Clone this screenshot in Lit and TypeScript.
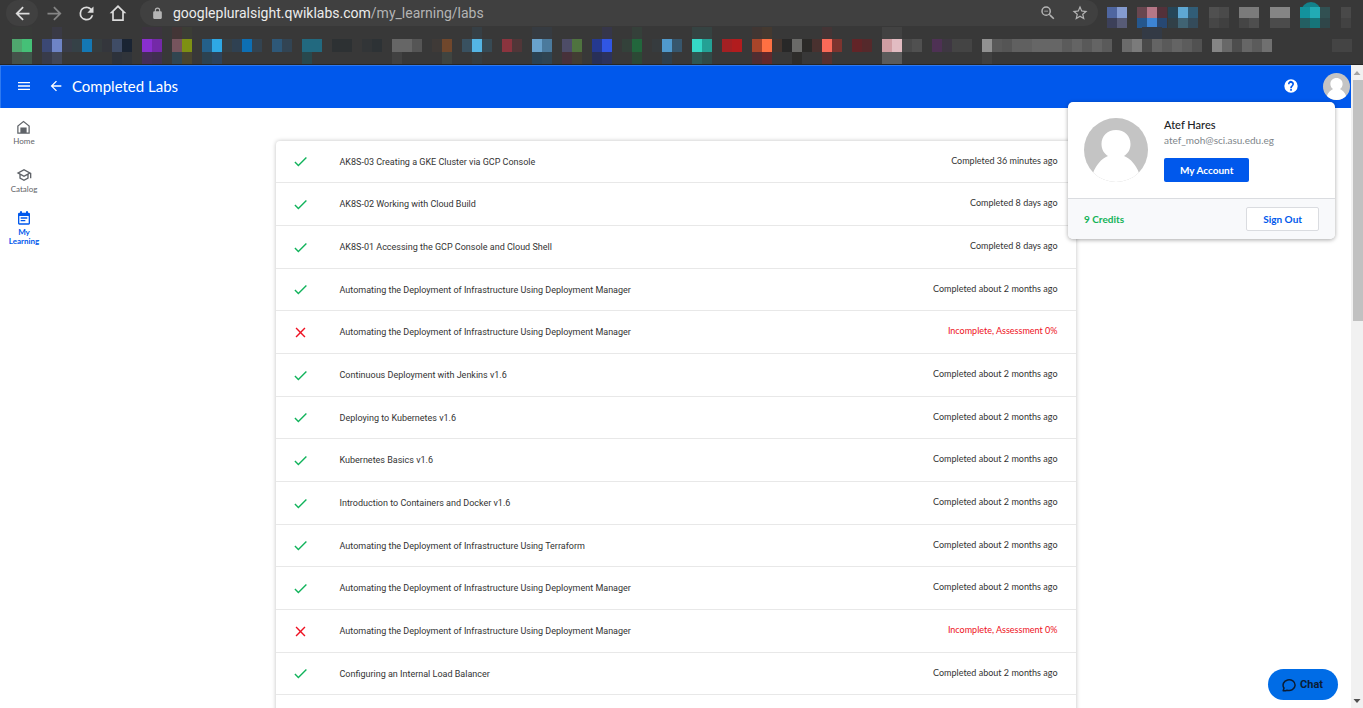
import { LitElement, html, svg, css } from "lit";
import { customElement } from "lit/decorators.js";

type Lab = { title: string; status: string; ok: boolean };
type Cell = [number, string, number?];

const lab = (title: string, status = "Completed about 2 months ago", ok = true): Lab => ({ title, status, ok });
const DEPLOY = "Automating the Deployment of Infrastructure Using Deployment Manager";

const LABS: Lab[] = [
  lab("AK8S-03 Creating a GKE Cluster via GCP Console", "Completed 36 minutes ago"),
  lab("AK8S-02 Working with Cloud Build", "Completed 8 days ago"),
  lab("AK8S-01 Accessing the GCP Console and Cloud Shell", "Completed 8 days ago"),
  lab(DEPLOY),
  lab(DEPLOY, "Incomplete, Assessment 0%", false),
  lab("Continuous Deployment with Jenkins v1.6"),
  lab("Deploying to Kubernetes v1.6"),
  lab("Kubernetes Basics v1.6"),
  lab("Introduction to Containers and Docker v1.6"),
  lab("Automating the Deployment of Infrastructure Using Terraform"),
  lab(DEPLOY),
  lab(DEPLOY, "Incomplete, Assessment 0%", false),
  lab("Configuring an Internal Load Balancer"),
];

// Pixelated bookmark icons: start x, colour, width (10 when omitted).
const BOOKMARKS: Cell[] = [
  [12, "#4fa76e"], [22, "#45c077"], [42, "#3b4874"], [52, "#6e84c6"], [62, "#3a3d48"], [72, "#354147"],
  [82, "#1478b4"], [92, "#363c3e"], [102, "#34363c"], [112, "#3f4c66"], [122, "#1a2433"], [142, "#8a2fd0"],
  [152, "#7429a8"], [172, "#76545d"], [182, "#7e9013"], [202, "#24608a"], [212, "#2ea8e5"], [222, "#363f44"],
  [232, "#2f4152"], [242, "#0d6fb4"], [252, "#334350"], [272, "#2e5878"], [282, "#324453"], [302, "#22697f", 20],
  [332, "#2d3133", 20], [362, "#323537"], [372, "#2d3235"], [392, "#666666", 20], [412, "#555555"],
  [432, "#3f3a37"], [442, "#70472c"], [462, "#395160"], [472, "#54b5e4"], [482, "#374a54"], [502, "#8b343e"],
  [512, "#513638"], [532, "#69a2cc"], [542, "#4b7a9d"], [562, "#4d4c67"], [572, "#4f733f"], [592, "#25398f"],
  [602, "#3056e5"], [622, "#33413a"], [632, "#22663c"], [652, "#363b3e"], [662, "#5099cc"], [672, "#37566c"],
  [692, "#35d8c6"], [702, "#24a195"], [722, "#a32023"], [732, "#b11c1e"], [752, "#a8452a"], [762, "#ff7042"],
  [772, "#43352f"], [782, "#282828"], [792, "#6a6a68"], [802, "#2b2a28"], [812, "#49312f"], [822, "#fb6a58"],
  [832, "#7c342f"], [852, "#622427"], [862, "#55292b"], [882, "#d09da2"], [892, "#e2bcc2"], [902, "#494949"],
  [912, "#505050"], [932, "#4e3154"], [942, "#3e3742"], [952, "#444444", 20], [982, "#919191"], [992, "#595959"],
  [1002, "#555555"], [1012, "#606060", 20], [1032, "#666666", 30], [1062, "#5b5b5b"], [1072, "#646464"],
  [1082, "#595959"], [1092, "#646464"], [1102, "#5a5a5a"], [1122, "#6b6b6b"], [1132, "#7b7b7b"],
  [1142, "#4a4a4a"], [1152, "#646464"], [1162, "#5a5a5a"], [1172, "#646464"], [1182, "#5c5c5c"], [1192, "#515151"],
  [1212, "#858585"], [1222, "#686868"], [1232, "#4d4d4d"], [1242, "#666666"], [1252, "#5b5b5b"], [1262, "#707070"],
  [1332, "#444444", 20],
];
const GLOW: Cell[] = [
  [12, "#45514a"], [22, "#40564a"], [42, "#383b4a"], [52, "#424758"], [112, "#2d323b"], [122, "#30343a"],
  [142, "#452d58"], [152, "#402f50"], [172, "#314550"], [182, "#49452f"], [202, "#2c4250"], [212, "#2d435b"],
  [302, "#28484d"], [392, "#414141"], [442, "#3f4440"], [472, "#363d40"], [532, "#2b4252"], [542, "#2f4452"],
  [562, "#47313a"], [572, "#423d33"], [592, "#282f57"], [602, "#2c325d"], [632, "#2c4935"], [662, "#2e3f4c"],
  [692, "#2f5752"], [702, "#304a47"], [752, "#502d31"], [762, "#63282b"], [792, "#2e2d2b"], [822, "#573030"],
  [882, "#5b5b5b", 20], [982, "#404040"],
];
const HAZE: Cell[] = [
  [12, "#383a38", 20], [52, "#3a3a45"], [142, "#3c343f", 20], [172, "#433536"], [182, "#3b3d35"],
  [472, "#363f45"], [532, "#363b41", 20], [602, "#36364a"], [632, "#35403a"], [692, "#354342", 20],
  [752, "#403633"], [762, "#443930"], [822, "#443435"], [882, "#424242", 20], [1142, "#333a45", 20],
];
const EXT_TOP: Cell[] = [
  [1, "#4f66a0"], [11, "#849bd0"], [31, "#68464f"], [41, "#b67787"], [51, "#54313a"], [62, "#264658"],
  [72, "#5ea7d3"], [82, "#315d77"], [103, "#505050"], [113, "#4a4a4a"], [133, "#7b7b7b", 20],
  [164, "#858585", 20], [194, "#13929c"], [204, "#22abb5"], [214, "#315052"], [235, "#494949"],
];
const EXT_LOW: Cell[] = [
  [1, "#3c4059"], [11, "#575b76"], [31, "#25578d"], [41, "#3d84d4"], [51, "#274873"], [62, "#314048"],
  [72, "#406373"], [82, "#344b5a"], [103, "#464646"], [113, "#404040"], [133, "#454545"], [143, "#4e4e4e"],
  [164, "#4b4b4b", 20], [194, "#245f62"], [204, "#167479"], [214, "#2f4649"], [235, "#424242"],
];

const cells = (list: Cell[], y: number, h: number) =>
  list.map(([x, fill, w = 10]) => svg`<rect x=${x} y=${y} width=${w} height=${h} fill=${fill}></rect>`);

const avatar = html`<svg viewBox="0 0 64 64" width="100%" height="100%" aria-hidden="true">
  <defs><clipPath id="disc"><circle cx="32" cy="32" r="32" /></clipPath></defs>
  <g clip-path="url(#disc)">
    <rect width="64" height="64" fill="#c4c4c4" />
    <path d="M32 12c8.500 0 14.500 6 14.500 14 0 5.500-2.500 9.500-6.500 12 7 3 12 9 15 17v9H9v-9c3-8 8-14 15-17-4-2.500-6.500-6.500-6.500-12 0-8 6-14 14.500-14z" fill="#fff" />
  </g>
</svg>`;

const icon = (path: string, size: number) =>
  html`<svg viewBox="0 0 24 24" width=${size} height=${size} fill="currentColor" aria-hidden="true"><path d=${path} /></svg>`;

const BACK = "M20 11H7.830l5.590-5.590L12 4l-8 8 8 8 1.410-1.410L7.830 13H20v-2z";
const FORWARD = "M12 4l-1.410 1.410L16.170 11H4v2h12.170l-5.580 5.590L12 20l8-8z";
const RELOAD = "M17.650 6.350A7.960 7.960 0 0 0 12 4a8 8 0 1 0 7.730 10h-2.080A6 6 0 1 1 12 6c1.660 0 3.140.69 4.220 1.780L13 11h7V4l-2.350 2.350z";
const HOME = "M12 2.500L2 12.300h3V21.500h14v-9.200h3L12 2.500zM12 5.300l5 4.900v9.300H7v-9.300l5-4.900z";
const LOCK = "M18 8h-1V6A5 5 0 0 0 7 6v2H6a2 2 0 0 0-2 2v10c0 1.100.9 2 2 2h12a2 2 0 0 0 2-2V10a2 2 0 0 0-2-2zM9 6a3 3 0 0 1 6 0v2H9V6z";
const ZOOM_OUT = "M15.500 14h-.79l-.28-.27A6.470 6.470 0 0 0 16 9.500 6.500 6.500 0 1 0 9.500 16c1.610 0 3.090-.59 4.230-1.570l.27.28v.79l5 4.990L20.490 19l-4.990-5zm-6 0a4.500 4.500 0 1 1 0-9 4.500 4.500 0 0 1 0 9zM7 9h5v1H7z";
const STAR = "M22 9.240l-7.190-.62L12 2 9.190 8.630 2 9.240l5.460 4.730L5.820 21 12 17.270 18.180 21l-1.630-7.030L22 9.240zM12 15.400l-3.760 2.270 1-4.280-3.320-2.880 4.380-.38L12 6.100l1.710 4.040 4.380.38-3.320 2.880 1 4.280L12 15.400z";
const MENU = "M3 18h18v-2H3v2zm0-5h18v-2H3v2zm0-7v2h18V6H3z";
const HELP = "M12 2a10 10 0 1 0 0 20 10 10 0 0 0 0-20zm1.300 17h-2.500v-2.500h2.500V19zm2.300-7.600l-.9.920c-.9.900-1.400 1.580-1.400 3.180h-2.500v-.5c0-1.100.45-2.100 1.170-2.830l1.240-1.260A2 2 0 1 0 9.800 9.500H7.500a4.500 4.500 0 1 1 8.100 1.900z";
const SIDE_HOME = "M12 1L2 9v13h20V9L12 1zm8 19h-3v-8H7v8H4V10l8-6.500L20 10v10z";
const SCHOOL = "M12 3L1 9l4 2.180v6L12 21l7-3.820v-6l2-1.090V17h2V9L12 3zm6.820 6L12 12.720 5.180 9 12 5.280 18.820 9zM17 16l-5 2.720L7 16v-3.730L12 15l5-2.730V16z";
const CALENDAR = "M19 4h-1V2h-3v2H9V2H6v2H5a2 2 0 0 0-2 2v14c0 1.100.9 2 2 2h14a2 2 0 0 0 2-2V6a2 2 0 0 0-2-2zm0 16H5V9h14v11zM7 11h10v2H7zM7 15h7v2H7z";
const CHECK = "M9 16.170L4.830 12l-1.420 1.410L9 19 21 7l-1.410-1.410z";
const CROSS = "M19 6.410L17.590 5 12 10.590 6.410 5 5 6.410 10.590 12 5 17.590 6.410 19 12 13.410 17.590 19 19 17.590 13.410 12z";

@customElement("browser-chrome")
class BrowserChrome extends LitElement {
  static styles = css`
    :host { display: block; background: #383838; border-bottom: 1px solid #252525; color: #dcdcdc; overflow: hidden; }
    .bar { display: flex; align-items: center; height: 26px; padding-left: 6px; }
    .nav { display: flex; }
    button { display: grid; place-items: center; flex: none; width: 32px; height: 26px; padding: 0; border: 0; background: none; color: inherit; }
    .back { background: #404040; border-radius: 14px; }
    .dim { color: #858585; }
    .address { display: flex; align-items: center; flex: 1; height: 26px; margin-left: 6px; padding: 0 2px 0 11px; background: #404040; border-radius: 12px 12px 14px 14px; color: #b4b4b4; }
    .url { flex: 1; margin-left: 9px; font: 14px/20px Roboto, sans-serif; outline: 0; white-space: nowrap; }
    .host { color: #ececec; }
    .extensions { flex: none; width: 257px; height: 26px; overflow: visible; margin-left: 8px; }
    .bookmarks { display: block; height: 38px; }
  `;
  render() {
    return html`
      <div class="bar">
        <div class="nav">
          <button class="back" aria-label="Back">${icon(BACK, 21)}</button>
          <button class="dim" aria-label="Forward">${icon(FORWARD, 21)}</button>
          <button aria-label="Reload">${icon(RELOAD, 21)}</button>
          <button aria-label="Home page">${icon(HOME, 20)}</button>
        </div>
        <div class="address">
          ${icon(LOCK, 13)}
          <div class="url" role="textbox" contenteditable="true" aria-label="Address"><span class="host">googlepluralsight.qwiklabs.com</span>/my_learning/labs</div>
          <button aria-label="Zoom out">${icon(ZOOM_OUT, 18)}</button>
          <button aria-label="Bookmark this page">${icon(STAR, 18)}</button>
        </div>
        <svg class="extensions" aria-hidden="true">
          <circle cx="205" cy="12" r="10" fill="#13828b" />
          ${cells(EXT_TOP, 7, 11)}${cells(EXT_LOW, 18, 10)}
        </svg>
      </div>
      <svg class="bookmarks" width="100%" height="38" aria-hidden="true">
        ${cells(HAZE, 1, 12)}${cells(BOOKMARKS, 13, 13)}${cells(GLOW, 26, 12)}
      </svg>
    `;
  }
}

@customElement("account-menu")
class AccountMenu extends LitElement {
  static styles = css`
    :host { display: block; width: 267px; border-radius: 5px; background: #fff; overflow: hidden; box-shadow: 0 1px 4px rgba(0, 0, 0, 0.35); font: 10px/12px Lato, sans-serif; }
    .profile { display: flex; gap: 16px; padding: 16px; }
    .photo { width: 64px; height: 64px; }
    .name { font-size: 11px; line-height: 14px; color: #202124; font-weight: 500; }
    .mail { margin-top: 1px; line-height: 14px; color: #80868b; }
    button { height: 24px; padding: 0 16px; border-radius: 2px; font: 700 10px/12px Lato, sans-serif; }
    .primary { margin-top: 11px; border: 0; background: #0058ec; color: #fff; }
    .footer { display: flex; align-items: center; justify-content: space-between; padding: 8px 16px; border-top: 1px solid #dadce0; background: #f8f9fb; }
    .credits { color: #12b357; font-weight: 700; }
    .secondary { border: 1px solid #dadce0; background: #fff; color: #0058ec; }
  `;
  render() {
    return html`
      <div class="profile">
        <div class="photo">${avatar}</div>
        <div>
          <div class="name">Atef Hares</div>
          <div class="mail">atef_moh@sci.asu.edu.eg</div>
          <button class="primary">My Account</button>
        </div>
      </div>
      <div class="footer">
        <span class="credits">9 Credits</span>
        <button class="secondary">Sign Out</button>
      </div>
    `;
  }
}

@customElement("lab-list")
class LabList extends LitElement {
  static styles = css`
    :host { display: block; background: #fff; border-radius: 4px 4px 0 0; box-shadow: 0 0 4px rgba(0, 0, 0, 0.25); }
    ul { margin: 0; padding: 0; list-style: none; }
    li { box-sizing: border-box; display: flex; align-items: center; height: 43px; padding: 0 18px 0 16px; border-bottom: 1px solid #e8e8e8; }
    li:nth-child(3n + 1) { height: 42px; }
    .mark { display: flex; width: 48px; color: #12b35c; }
    .mark.fail, .status.fail { color: #ee1122; }
    .title { flex: 1; font: 9px/14px Roboto, sans-serif; color: #333; text-decoration: none; }
    .status { padding-bottom: 2px; font: 9px/14px Lato, sans-serif; color: #333; }
  `;
  render() {
    return html`<ul>
      ${LABS.map(({ title, status, ok }) => html`<li>
        <span class="mark ${ok ? "" : "fail"}">${icon(ok ? CHECK : CROSS, 17)}</span>
        <a class="title" href="#">${title}</a>
        <span class="status ${ok ? "" : "fail"}">${status}</span>
      </li>`)}
    </ul>`;
  }
}

@customElement("app-root")
class AppRoot extends LitElement {
  static styles = css`
    :host { display: flex; flex-direction: column; height: 100vh; overflow: hidden; background: #fff; }
    .window { display: flex; flex: 1; min-height: 0; }
    .page { position: relative; display: flex; flex: 1; flex-direction: column; min-width: 0; overflow: hidden; }
    header { box-sizing: border-box; display: flex; align-items: center; flex: none; height: 43px; padding: 0 0 2px 15px; border-top: 1px solid #2f7af0; border-left: 1px solid #2f7af0; background: #0058ec; color: #fff; }
    header button { display: grid; place-items: center; padding: 0; border: 0; background: none; color: inherit; }
    h1 { flex: 1; margin: 0 0 0 8px; font: 400 15px/20px Lato, sans-serif; }
    .back { margin-left: 16px; }
    header .user { width: 27px; height: 27px; margin-left: 24px; margin-right: 1px; }
    .body { display: grid; flex: 1; grid-template-columns: 48px minmax(0, 800px) 48px; justify-content: space-between; min-height: 0; padding-left: 1px; margin-left: -1px; }
    nav { display: flex; flex-direction: column; align-items: center; gap: 15px; padding-top: 12px; }
    nav a { display: flex; flex-direction: column; align-items: center; gap: 2px; min-height: 28px; font: 8px/9px Lato, sans-serif; color: #5f6368; text-align: center; text-decoration: none; }
    nav a:first-child { margin-bottom: 4px; }
    nav .current { color: #0058ec; font-weight: 700; }
    lab-list { margin: 33px 0 -8px; }
    account-menu { position: absolute; top: 37px; right: 16px; }
    .chat { position: absolute; right: 13px; bottom: 8px; display: flex; align-items: center; gap: 4px; height: 31px; padding: 0 15px 0 14px; border: 0; border-radius: 16px; background: #006ce6; color: #0b1c33; font: 700 11px/14px Roboto, sans-serif; }
    .scroll { display: flex; flex: none; flex-direction: column; align-items: flex-end; width: 12px; background: #f1f1f1; }
    .thumb { width: 10px; height: 241px; background: #c1c1c1; }
    .scroll svg { flex: none; }
    .rest { flex: 1; }
  `;
  render() {
    return html`
      <browser-chrome></browser-chrome>
      <div class="window">
        <div class="page">
          <header>
            <button aria-label="Menu">${icon(MENU, 16)}</button>
            <button class="back" aria-label="Go back">${icon(BACK, 16)}</button>
            <h1>Completed Labs</h1>
            <button aria-label="Help">${icon(HELP, 16)}</button>
            <button class="user" aria-label="Account">${avatar}</button>
          </header>
          <div class="body">
            <nav>
              <a href="#">${icon(SIDE_HOME, 15)}Home</a>
              <a href="#">${icon(SCHOOL, 16)}Catalog</a>
              <a href="#" class="current">${icon(CALENDAR, 16)}<span>My<br />Learning</span></a>
            </nav>
            <lab-list></lab-list>
          </div>
          <account-menu></account-menu>
          <button class="chat">
            <svg viewBox="1 1 14 14" width="14" height="14" fill="none" stroke="currentColor" stroke-width="1.500" aria-hidden="true">
              <path d="M2.200 13.800L3 11A6 5.400 0 1 1 6 13.200C4.500 13.900 3.500 14 2.200 13.800z" stroke-linejoin="round" />
            </svg>
            Chat
          </button>
        </div>
        <div class="scroll" aria-hidden="true">
          <svg width="12" height="15"><path d="M2.500 10h7L6 6z" fill="#a3a3a3" /></svg>
          <div class="thumb"></div>
          <div class="rest"></div>
          <svg width="12" height="14"><path d="M2.500 5h7L6 9z" fill="#505050" /></svg>
        </div>
      </div>
    `;
  }
}
